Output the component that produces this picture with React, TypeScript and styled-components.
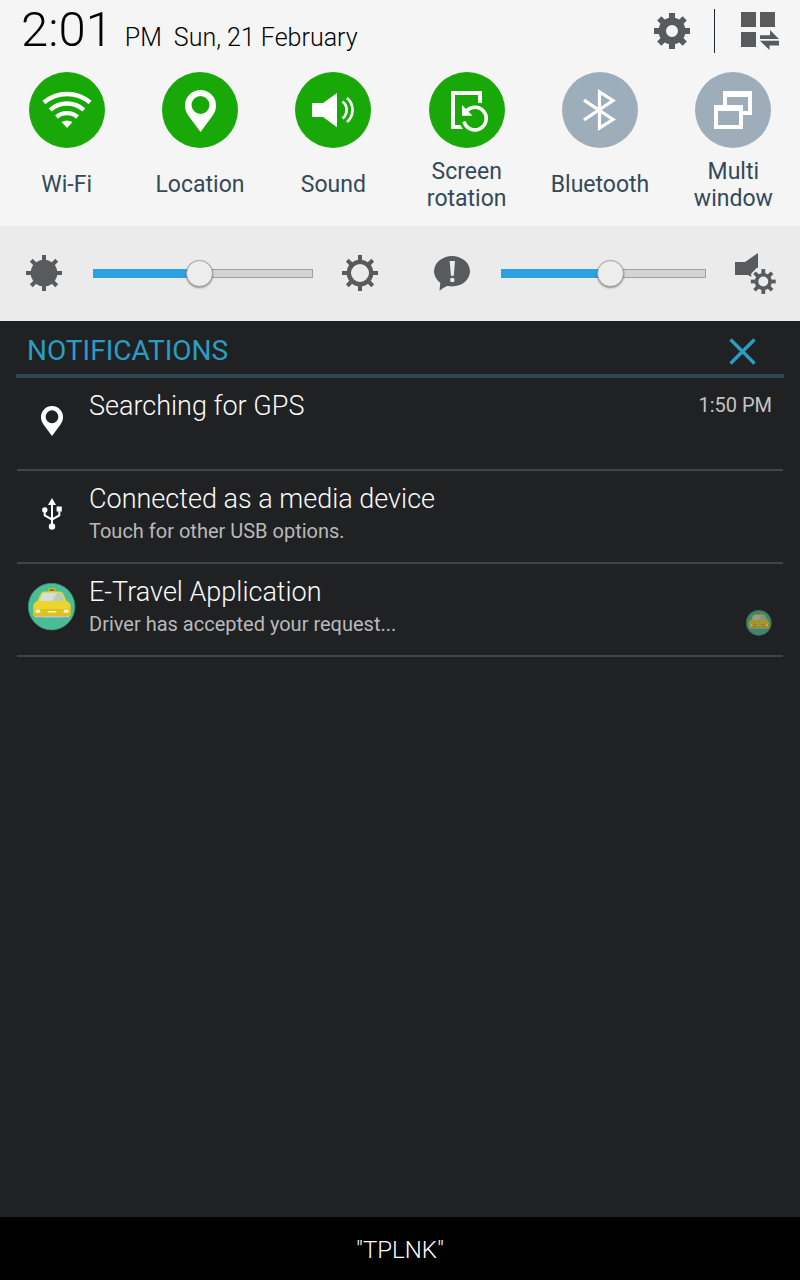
import React, { useState } from "react";
import styled, { createGlobalStyle } from "styled-components";

const GlobalStyle = createGlobalStyle`
  *, *::before, *::after { box-sizing: border-box; }
  body {
    margin: 0;
    background: #202123;
    font-family: Roboto, "Liberation Sans", sans-serif;
  }
  button {
    margin: 0;
    padding: 0;
    border: 0;
    background: none;
    font: inherit;
    color: inherit;
    cursor: pointer;
  }
  svg { display: block; flex: none; }
`;

const Shade = styled.div`
  display: flex;
  flex-direction: column;
  min-height: 100vh;
  background: #202123;
`;

const QuickPanel = styled.section`
  background: #f5f5f5;
  padding-bottom: 14px;
`;

const StatusBar = styled.header`
  display: flex;
  align-items: center;
  justify-content: space-between;
  height: 62px;
  padding: 0 21px;
`;

const Clock = styled.div`
  display: flex;
  align-items: baseline;
  margin-bottom: 2px;
  color: #000;
  font-weight: 300;
  font-size: 25px;
  white-space: nowrap;
`;

const ClockTime = styled.span`
  font-size: 49px;
  line-height: 60px;
  margin-right: 12px;
`;

const ClockDate = styled.span`
  margin-left: 12px;
`;

const StatusActions = styled.div`
  display: flex;
  align-items: center;
`;

const ActionDivider = styled.span`
  width: 1px;
  height: 44px;
  margin: 0 26px 0 24px;
  background: #1b2b3a;
`;

const Toggles = styled.div`
  display: grid;
  grid-template-columns: repeat(6, 1fr);
  padding-top: 10px;
`;

const Toggle = styled.button`
  display: flex;
  flex-direction: column;
  align-items: center;
  gap: 10px;
  padding: 0 8px;
`;

const ToggleDisc = styled.span<{ $on: boolean }>`
  width: 76px;
  height: 76px;
  border-radius: 50%;
  background: ${(p) => (p.$on ? "#18a908" : "#9eadba")};
`;

const ToggleLabel = styled.span`
  display: flex;
  align-items: center;
  min-height: 52px;
  color: #34495a;
  font-size: 23px;
  line-height: 27px;
  text-align: center;
`;

const Sliders = styled.section`
  display: grid;
  grid-template-columns: 36fr 35fr;
  gap: 56px;
  height: 95px;
  padding: 0 24px 0 26px;
  background: #ebebeb;
`;

const SliderGroup = styled.div`
  display: flex;
  align-items: center;
  gap: 30px;
  min-width: 0;

  > svg { margin-bottom: 1px; }
`;

const Range = styled.input<{ $fill: number }>`
  appearance: none;
  flex: 1;
  min-width: 0;
  height: 28px;
  margin: 0 -1px 0 1px;
  background: none;

  &::-webkit-slider-runnable-track {
    height: 9px;
    border: 1px solid transparent;
    background:
      linear-gradient(to right, #2ea1e2 ${(p) => p.$fill}%, transparent ${(p) => p.$fill}%) border-box,
      linear-gradient(#d4d4d4, #d4d4d4) padding-box,
      linear-gradient(#a0a0a0, #a0a0a0) border-box;
  }

  &::-webkit-slider-thumb {
    appearance: none;
    width: 27px;
    height: 27px;
    margin-top: -10px;
    border: 1px solid #a2a2a2;
    border-radius: 50%;
    background: #ededed;
    box-shadow: 0 1px 2px rgba(0, 0, 0, 0.4);
  }
`;

const Notifications = styled.main`
  flex: 1;
  padding: 0 16px;
`;

const NotificationsHead = styled.div`
  display: flex;
  align-items: center;
  justify-content: space-between;
  height: 57px;
  padding: 7px 28px 0 11px;
  border-bottom: 4px solid #2e4750;
  color: #2a9dc3;
`;

const Heading = styled.h1`
  margin: 0;
  font-size: 28px;
  line-height: 32px;
  font-weight: 400;
`;

const NotificationList = styled.ul`
  margin: 0 1px;
  padding: 0;
  list-style: none;
`;

const Notification = styled.li`
  display: flex;
  gap: 13px;
  height: 93px;
  padding: 12px 11px 0;
  border-bottom: 2px solid #40434a;
`;

const NotificationIcon = styled.div`
  display: flex;
  align-items: center;
  justify-content: center;
  width: 48px;
  height: 61px;
`;

const NotificationText = styled.div`
  flex: 1;
  min-width: 0;
`;

const Title = styled.h2`
  margin: 0;
  color: #fafafa;
  font-size: 27px;
  line-height: 32px;
  font-weight: 300;
`;

const Detail = styled.p`
  margin: 0;
  color: #b9b9ba;
  font-size: 20px;
  line-height: 32px;
`;

const Aside = styled.div`
  display: flex;
  flex-direction: column;
  align-items: flex-end;
  height: 60px;
  color: #c4c4c5;
  font-size: 20px;
  line-height: 30px;
`;

const Badge = styled.span`
  margin-top: auto;
  opacity: 0.65;
`;

const Carrier = styled.footer`
  height: 63px;
  padding-top: 2px;
  background: #000;
  color: #fff;
  font-size: 24px;
  font-weight: 300;
  line-height: 62px;
  text-align: center;
`;

const GREY = "#595a5c";
const TURNS = [0, 45, 90, 135, 180, 225, 270, 315];

/* Toothed wheel centred on the origin, 18 units from hub to tooth tip. */
function Cog({ body, hole, tooth }: { body: number; hole: number; tooth: number }) {
  const mid = (body + hole) / 2;
  return (
    <g>
      <circle r={mid} fill={hole ? "none" : GREY} stroke={GREY} strokeWidth={body - hole} />
      {TURNS.map((a) => (
        <rect key={a} x={-tooth / 2} y={-18} width={tooth} height={20 - body} fill={GREY} transform={`rotate(${a})`} />
      ))}
    </g>
  );
}

function CogIcon(props: { body: number; hole: number; tooth: number }) {
  return (
    <svg width="36" height="36" viewBox="-18 -18 36 36" aria-hidden="true">
      <Cog {...props} />
    </svg>
  );
}

const EditPanelIcon = () => (
  <svg width="38" height="38" viewBox="0 0 38 38" fill={GREY} aria-hidden="true">
    <path d="M0 0h15v15H0zM19 0h15v15H19zM0 20h15v15H0zM19 23.200H29V18L38 27H19zM38 28.800V33.500H28.500V38L19 28.800z" />
  </svg>
);

const PIN = "M38.500 60L27 44.500C24.500 41 23 38 23 33.500a15.500 15.500 0 0 1 31 0c0 4.500-1.500 7.500-4 11zM38.500 24a9 9 0 1 0 0 18 9 9 0 0 0 0-18z";

const glyphs: Record<string, React.ReactNode> = {
  wifi: (
    <>
      <g fill="none" stroke="#fff" strokeWidth="4.300">
        <path d="M14.900 30.500A35.600 35.600 0 0 1 61.100 30.500" />
        <path d="M21.200 38A25 25 0 0 1 54.800 38" />
        <path d="M27.500 45A16.400 16.400 0 0 1 48.500 45" />
      </g>
      <path d="M32.500 50A11 11 0 0 1 43.500 50L38 56z" fill="#fff" />
    </>
  ),
  location: <path d={PIN} fill="#fff" fillRule="evenodd" />,
  sound: (
    <>
      <path d="M17 31H28L42 21V55.300L28 45H17z" fill="#fff" />
      <path d="M47.500 29.500A10.800 10.800 0 0 1 47.500 46.500M52 26A15.800 15.800 0 0 1 52 50" fill="none" stroke="#fff" strokeWidth="2.700" />
    </>
  ),
  rotation: (
    <>
      <path d="M22 19H53V31H49V23H26V53H31.300L34 57H22z" fill="#fff" />
      <path d="M35 49.500A11.300 11.300 0 1 0 38 38.500" fill="none" stroke="#fff" strokeWidth="3.600" />
      <path d="M33 33V43.700H43.500z" fill="#fff" />
    </>
  ),
  bluetooth: <path d="M22 28.200L51 47.500L37.500 56V20L51 28.500L22 47.800" fill="none" stroke="#fff" strokeWidth="3.200" />,
  windows: (
    <path d="M28 19H57V43H48V39H53V25H32V33H28zM19 33H48V57H19zM23 39V53H44V39z" fill="#fff" fillRule="evenodd" />
  ),
};

const SpeechIcon = () => (
  <svg width="36" height="36" viewBox="0 0 36 36" aria-hidden="true">
    <ellipse cx="18" cy="16.200" rx="18" ry="15.200" fill={GREY} />
    <path d="M5.500 36L6.500 25L15 30.500Q10 31.500 5.500 36z" fill={GREY} />
    <path d="M15.700 6H21L19.800 20.800H16.900z" fill="#ebebeb" />
    <circle cx="18.300" cy="25" r="2.300" fill="#ebebeb" />
  </svg>
);

const VolumeSettingsIcon = () => (
  <svg width="41" height="41" viewBox="0 0 41 41" aria-hidden="true">
    <path d="M0 9H10L23 0V15L16.500 21V24L13 22H0z" fill={GREY} />
    <path d="M17 24L16 21L22 14.500L24 17z" fill="#ebebeb" />
    <g transform="translate(28.300 28.500) scale(.69)">
      <Cog body={12.500} hole={7.200} tooth={5.500} />
    </g>
  </svg>
);

const CloseIcon = () => (
  <svg width="27" height="27" viewBox="0 0 27 27" aria-hidden="true">
    <path d="M1.500 1.500l24 24m0-24l-24 24" stroke="currentColor" strokeWidth="3.400" />
  </svg>
);

const PinIcon = () => (
  <svg width="22" height="30" viewBox="23 18 31 42" aria-hidden="true">
    <path d={PIN} fill="#fff" fillRule="evenodd" />
  </svg>
);

const UsbIcon = () => (
  <svg width="20" height="32" viewBox="0 0 20 32" aria-hidden="true">
    <path d="M2.700 12v5.500l7.300 4 7.300-4V11M10 5v23" fill="none" stroke="#fff" strokeWidth="2" />
    <path d="M10 0l4 7H6zM14.600 8.500h5.200v5h-5.200z" fill="#fff" />
    <circle cx="2.800" cy="12" r="2.700" fill="#fff" />
    <circle cx="10" cy="28.500" r="3.200" fill="#fff" />
  </svg>
);

const TaxiIcon = ({ size }: { size: number }) => (
  <svg width={size} height={size} viewBox="0 0 48 48" aria-hidden="true">
    <circle cx="23.600" cy="23.600" r="23.300" fill="#4bbd96" stroke="#36936f" strokeWidth=".8" />
    <path d="M20.300 5.300h7v4h-7z" fill="#d8bd22" />
    <path d="M21.500 6.300h4.600v1.600h-4.600z" fill="#7b681c" />
    <path d="M9.500 33h4.500v2H9.500zM34.500 33H39v2h-4.500z" fill="#68777a" />
    <path d="M16 8.500H32Q34.500 8.500 35.500 11L38.500 18Q42.800 19.500 42.800 24V31Q42.800 33.500 40.500 33.500H7.500Q5.200 33.500 5.200 31V24Q5.200 19.500 9.500 18L12.500 11Q13.500 8.500 16 8.500z" fill="#ebd52b" />
    <path d="M5.300 26H42.700V31Q42.700 33.500 40.500 33.500H7.500Q5.300 33.500 5.300 31z" fill="#dfc023" />
    <path d="M16 9.800H32Q33.300 9.800 34 11.500L36.500 18H11.500L14 11.500Q14.700 9.800 16 9.800z" fill="#d2dfe0" />
    <path d="M29 9.800H32Q33.300 9.800 34 11.500L36.500 18H24z" fill="#b9cfb5" />
    <path d="M7 33H41v1.500H7z" fill="#b9cbc5" />
    <ellipse cx="9.800" cy="28.300" rx="2.800" ry="1.800" fill="#fffbd8" />
    <ellipse cx="38.200" cy="28.300" rx="2.800" ry="1.800" fill="#fffbd8" />
    <rect x="19.600" y="28" width="8.800" height="1.600" rx=".8" fill="#fff7d0" />
  </svg>
);

const initialToggles = [
  { id: "wifi", label: "Wi-Fi", on: true },
  { id: "location", label: "Location", on: true },
  { id: "sound", label: "Sound", on: true },
  { id: "rotation", label: "Screen rotation", on: true },
  { id: "bluetooth", label: "Bluetooth", on: false },
  { id: "windows", label: "Multi window", on: false },
];

const notifications = [
  { title: "Searching for GPS", icon: <PinIcon />, aside: <time>1:50 PM</time> },
  { title: "Connected as a media device", detail: "Touch for other USB options.", icon: <UsbIcon /> },
  {
    title: "E-Travel Application",
    detail: "Driver has accepted your request...",
    icon: <TaxiIcon size={48} />,
    aside: <Badge><TaxiIcon size={26} /></Badge>,
  },
];

function Slider({ label, initial }: { label: string; initial: number }) {
  const [value, setValue] = useState(initial);
  return (
    <Range
      type="range"
      aria-label={label}
      min={0}
      max={100}
      value={value}
      $fill={value}
      onChange={(e) => setValue(Number(e.target.value))}
    />
  );
}

export default function App() {
  const [toggles, setToggles] = useState(initialToggles);
  const flip = (id: string) => setToggles((all) => all.map((t) => (t.id === id ? { ...t, on: !t.on } : t)));

  return (
    <Shade>
      <GlobalStyle />
      <QuickPanel>
        <StatusBar>
          <Clock>
            <ClockTime>2:01</ClockTime>
            <span>PM</span>
            <ClockDate>Sun, 21 February</ClockDate>
          </Clock>
          <StatusActions>
            <button aria-label="Settings">
              <CogIcon body={13.500} hole={6} tooth={6} />
            </button>
            <ActionDivider />
            <button aria-label="Edit quick settings">
              <EditPanelIcon />
            </button>
          </StatusActions>
        </StatusBar>
        <Toggles>
          {toggles.map((t) => (
            <Toggle key={t.id} aria-pressed={t.on} onClick={() => flip(t.id)}>
              <ToggleDisc $on={t.on}>
                <svg width="76" height="76" viewBox="0 0 76 76" aria-hidden="true">{glyphs[t.id]}</svg>
              </ToggleDisc>
              <ToggleLabel>{t.label}</ToggleLabel>
            </Toggle>
          ))}
        </Toggles>
      </QuickPanel>

      <Sliders>
        <SliderGroup>
          <CogIcon body={13.300} hole={0} tooth={4} />
          <Slider label="Brightness" initial={48} />
          <CogIcon body={13.300} hole={9} tooth={4} />
        </SliderGroup>
        <SliderGroup>
          <SpeechIcon />
          <Slider label="Notification volume" initial={54} />
          <button aria-label="Volume settings">
            <VolumeSettingsIcon />
          </button>
        </SliderGroup>
      </Sliders>

      <Notifications>
        <NotificationsHead>
          <Heading>NOTIFICATIONS</Heading>
          <button aria-label="Clear notifications">
            <CloseIcon />
          </button>
        </NotificationsHead>
        <NotificationList>
          {notifications.map((n) => (
            <Notification key={n.title}>
              <NotificationIcon>{n.icon}</NotificationIcon>
              <NotificationText>
                <Title>{n.title}</Title>
                {n.detail && <Detail>{n.detail}</Detail>}
              </NotificationText>
              {n.aside && <Aside>{n.aside}</Aside>}
            </Notification>
          ))}
        </NotificationList>
      </Notifications>

      <Carrier>"TPLNK"</Carrier>
    </Shade>
  );
}
